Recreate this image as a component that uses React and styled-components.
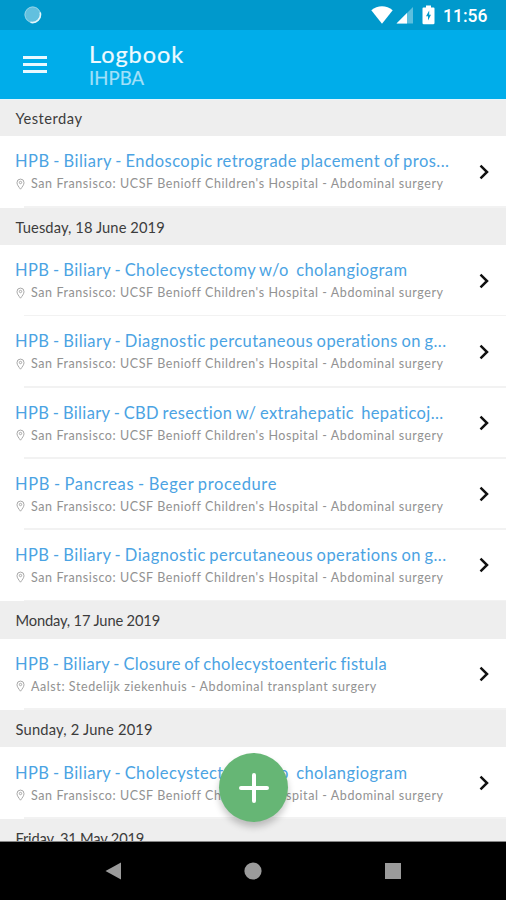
import React from 'react';
import styled, { createGlobalStyle } from 'styled-components';

const GlobalStyle = createGlobalStyle`
  * {
    box-sizing: border-box;
  }

  body {
    margin: 0;
    background-color: #fff;
    font-family: Lato, 'Open Sans', sans-serif;
    font-variant-ligatures: none;
  }
`;

const Screen = styled.div`
  position: relative;
  display: flex;
  flex-direction: column;
  width: 506px;
  height: 900px;
  overflow: hidden;
`;

const StatusBar = styled.div`
  display: flex;
  align-items: center;
  flex: none;
  height: 30px;
  padding: 0 18px 0 24px;
  background-color: #0099cc;
`;

const StatusIcons = styled.div`
  display: flex;
  align-items: center;
  margin-left: auto;
`;

const Clock = styled.div`
  width: 45px;
  margin-left: 8px;
  padding-top: 2px;
  color: #fff;
  font-family: Roboto, sans-serif;
  font-size: 17.5px;
  font-weight: 500;
  line-height: 24px;
  white-space: nowrap;
`;

const Header = styled.header`
  position: relative;
  display: flex;
  align-items: flex-start;
  flex: none;
  height: 69.75px;
  padding: 0 22px 0 23px;
  border-bottom: 1px solid #e4f6fd;
  background-color: #00adea;
`;

const MenuButton = styled.button`
  display: flex;
  flex-direction: column;
  gap: 4px;
  width: 24px;
  margin: 26px 42px 0 0;
  padding: 0;
  border: 0;
  background: none;
`;

const MenuLine = styled.span`
  height: 3px;
  background-color: #e9f9ff;
`;

const Titles = styled.div`
  padding-top: 10px;
`;

const Title = styled.h1`
  margin: 0;
  color: #eefaff;
  font-size: 23.5px;
  font-weight: 400;
  letter-spacing: 0.95px;
  line-height: 28px;
  -webkit-text-stroke: 0.2px #eefaff;
`;

const Subtitle = styled.div`
  color: #a3e0f9;
  font-size: 18.5px;
  letter-spacing: 0.1px;
  line-height: 21px;
  -webkit-text-stroke: 0.2px #a3e0f9;
`;

const List = styled.main`
  flex: 1;
  min-height: 0;
  margin-top: -1px;
  overflow: hidden;
`;

const DayHeader = styled.h2`
  height: 37.6px;
  margin: 0;
  padding-left: 15.5px;
  background-color: #eee;
  color: #3c3c3c;
  font-size: 14.7px;
  font-weight: 400;
  letter-spacing: ${({ $spacing }) => $spacing}px;
  line-height: 38.5px;
  white-space: nowrap;
`;

const Row = styled.div`
  display: flex;
  align-items: center;
  height: 71.2px;
  padding: 0 16px 0 15px;
`;

const RowText = styled.div`
  flex: 1;
  min-width: 0;
  white-space: pre;
`;

const Divider = styled.div`
  height: 1.5px;
  margin: -1.5px 0 0 24px;
  background-color: #f2f2f2;
`;

const Operation = styled.div`
  color: #4ba3e3;
  font-size: 16.5px;
  letter-spacing: ${({ $spacing }) => $spacing}px;
  line-height: 24px;
  word-spacing: -1px;
`;

const Place = styled.div`
  display: flex;
  align-items: center;
  gap: 6px;
  color: #929292;
  font-size: 12.5px;
  letter-spacing: 0.575px;
  line-height: 21px;
`;

const AddButton = styled.button`
  position: absolute;
  top: 753px;
  left: 219px;
  display: flex;
  align-items: center;
  justify-content: center;
  width: 69px;
  height: 69px;
  padding: 0;
  border: 0;
  border-radius: 50%;
  background-color: #66b675;
  box-shadow: 0 5px 7px rgba(0, 0, 0, 0.22);
`;

const NavBar = styled.nav`
  display: flex;
  align-items: center;
  justify-content: space-between;
  flex: none;
  height: 59px;
  padding: 0 104px;
  border-top: 1px solid #858585;
  background-color: #000;
`;

const days = [
  {
    name: 'Yesterday',
    spacing: 0.48,
    entries: [
      { title: 'HPB - Biliary - Endoscopic retrograde placement of pros...', spacing: 0.475 },
    ],
  },
  {
    name: 'Tuesday, 18 June 2019',
    spacing: 0.1,
    entries: [
      { title: 'HPB - Biliary - Cholecystectomy w/o  cholangiogram', spacing: 0.42 },
      { title: 'HPB - Biliary - Diagnostic percutaneous operations on g...', spacing: 0.43 },
      { title: 'HPB - Biliary - CBD resection w/ extrahepatic  hepaticoj...', spacing: 0.36 },
      { title: 'HPB - Pancreas - Beger procedure', spacing: 0.63 },
      { title: 'HPB - Biliary - Diagnostic percutaneous operations on g...', spacing: 0.43 },
    ],
  },
  {
    name: 'Monday, 17 June 2019',
    spacing: -0.16,
    entries: [
      {
        title: 'HPB - Biliary - Closure of cholecystoenteric fistula',
        spacing: 0.34,
        place: 'Aalst: Stedelijk ziekenhuis - Abdominal transplant surgery',
      },
    ],
  },
  {
    name: 'Sunday, 2 June 2019',
    spacing: 0.2,
    entries: [
      { title: 'HPB - Biliary - Cholecystectomy w/o  cholangiogram', spacing: 0.42 },
    ],
  },
  { name: 'Friday, 31 May 2019', spacing: -0.2, entries: [] },
];

const DEFAULT_PLACE = "San Fransisco: UCSF Benioff Children's Hospital - Abdominal surgery";

const PinIcon = () => (
  <svg width="10" height="12" viewBox="0 0 10 12" fill="none" stroke="#a8a8a8">
    <path d="M5.5 11.2C3.7 8.8 2 6.8 2 4.6a3.5 3.5 0 0 1 7 0C9 6.8 7.3 8.8 5.5 11.2Z" />
    <circle cx="5.5" cy="4.5" r="1.2" />
  </svg>
);

const ChevronIcon = () => (
  <svg width="12" height="16" viewBox="0 0 12 16" fill="none" stroke="#111" strokeWidth="2.5">
    <path d="M2.5 1.7 9 8 2.5 14.3" />
  </svg>
);

const SpinnerIcon = () => (
  <svg width="18" height="18" viewBox="0 0 18 18">
    <circle cx="8.7" cy="8.7" r="8.2" fill="#62c0df" />
    <circle cx="8.7" cy="8.7" r="7.7" fill="none" stroke="#8fd2e8" />
    <path d="M16.2 6.5A8 8 0 0 1 6.5 16.3" fill="none" stroke="#e4f6fb" strokeWidth="1.6" />
  </svg>
);

const WifiIcon = styled(({ className }) => (
  <svg className={className} width="22" height="18" viewBox="0 0 22 18">
    <path d="M0.3 4.3C6.5-1 15.5-1 21.7 4.3L11 17.8Z" fill="#fff" />
  </svg>
))`
  margin-right: 3px;
`;

const SignalIcon = styled(({ className }) => (
  <svg className={className} width="18" height="18" viewBox="0 0 18 18">
    <path d="M17 1V17.5H0.5Z" fill="#5dbfde" />
    <path d="M11 7V17.5H0.5Z" fill="#fff" />
  </svg>
))`
  margin-right: 8px;
`;

const BatteryIcon = () => (
  <svg width="13" height="20" viewBox="0 0 13 20">
    <path d="M4 0.5H9V2.5H11.5Q12.5 2.5 12.5 3.5V18Q12.5 19.3 11.2 19.3H1.8Q0.5 19.3 0.5 18V3.5Q0.5 2.5 1.5 2.5H4Z" fill="#fff" />
    <path d="M7.2 5.5 4 11.3H6V15.5L9 9.8H7.2Z" fill="#0099cc" />
  </svg>
);

const Entry = ({ entry }) => (
  <>
    <Row>
      <RowText>
        <Operation $spacing={entry.spacing}>{entry.title}</Operation>
        <Place>
          <PinIcon />
          {entry.place || DEFAULT_PLACE}
        </Place>
      </RowText>
      <ChevronIcon />
    </Row>
    <Divider />
  </>
);

const App = () => (
  <>
    <GlobalStyle />
    <Screen>
      <StatusBar>
        <SpinnerIcon />
        <StatusIcons>
          <WifiIcon />
          <SignalIcon />
          <BatteryIcon />
          <Clock>11:56</Clock>
        </StatusIcons>
      </StatusBar>
      <Header>
        <MenuButton aria-label="Menu">
          <MenuLine />
          <MenuLine />
          <MenuLine />
        </MenuButton>
        <Titles>
          <Title>Logbook</Title>
          <Subtitle>IHPBA</Subtitle>
        </Titles>
      </Header>
      <List>
        {days.map((day) => (
          <section key={day.name}>
            <DayHeader $spacing={day.spacing}>{day.name}</DayHeader>
            {day.entries.map((entry, i) => (
              <Entry key={i} entry={entry} />
            ))}
          </section>
        ))}
      </List>
      <AddButton aria-label="Add">
        <svg width="30" height="30" viewBox="0 0 30 30" stroke="#fff" strokeWidth="4" strokeLinecap="round">
          <path d="M15 2V28M2 15H28" />
        </svg>
      </AddButton>
      <NavBar>
        <svg width="18" height="18" viewBox="0 0 18 18" fill="#9b9b9b">
          <path d="M1.5 9 17 0.5V17.5Z" />
        </svg>
        <svg width="18" height="18" viewBox="0 0 18 18" fill="#9b9b9b">
          <circle cx="9" cy="9" r="8.6" />
        </svg>
        <svg width="18" height="18" viewBox="0 0 18 18" fill="#9b9b9b">
          <rect x="1" y="1" width="16" height="16" />
        </svg>
      </NavBar>
    </Screen>
  </>
);

export default App;
